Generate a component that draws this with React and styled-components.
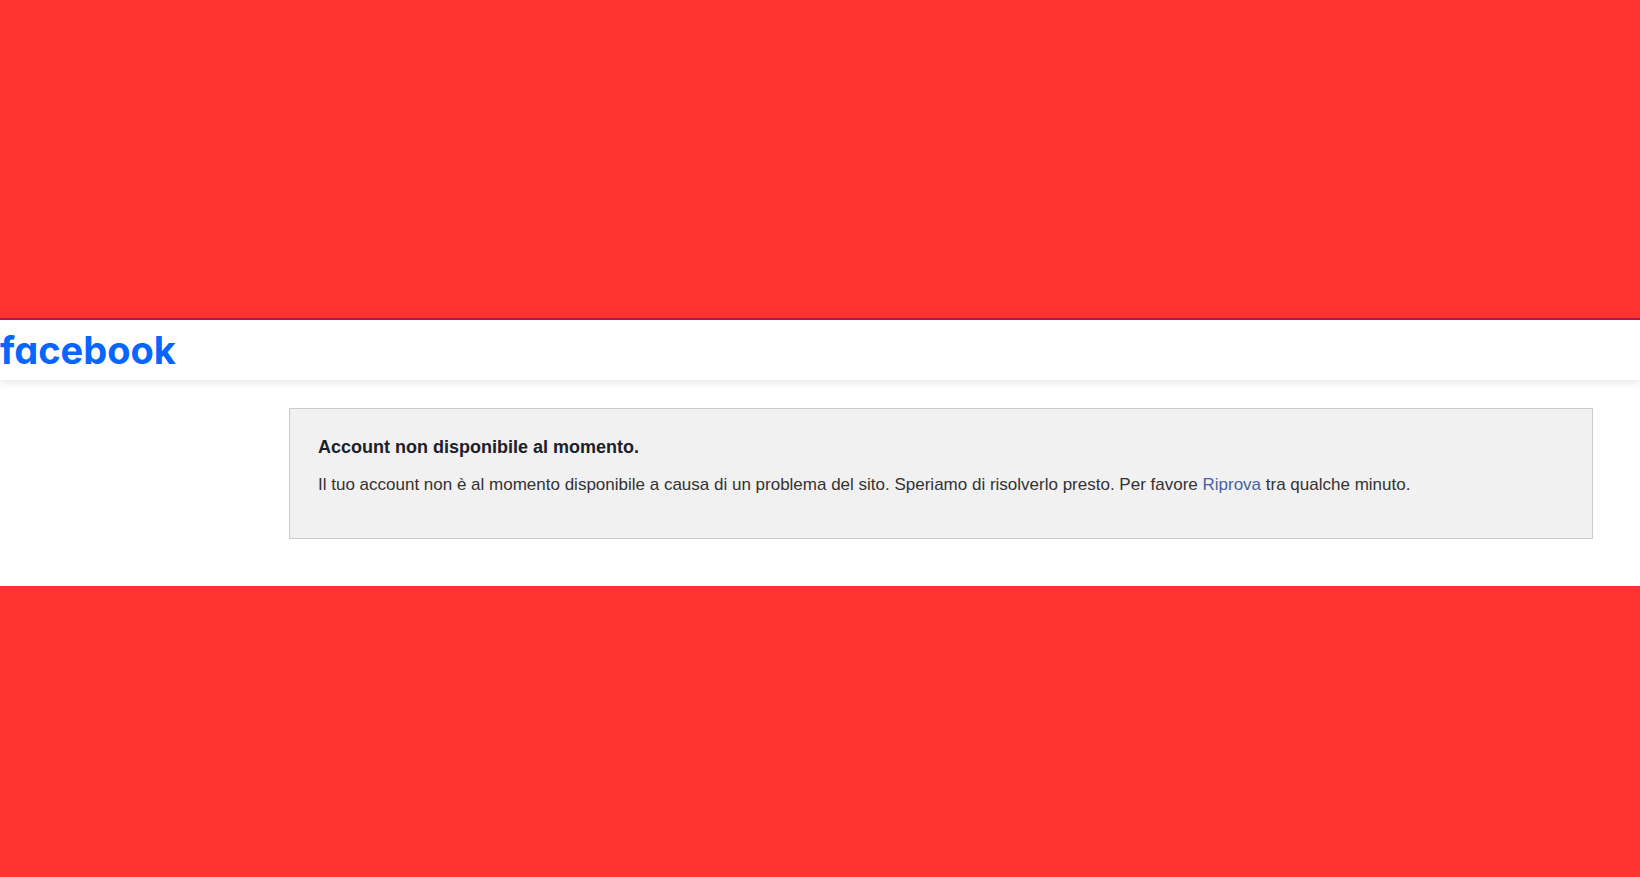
import styled, { createGlobalStyle } from "styled-components"


export default function App(){

    return(

        <Fundo>
            <GlobalStyle />

            <Pagina>
                <Topo>
                    <Logo href="#">facebook</Logo>
                </Topo>

                <Conteudo>
                    <Aviso>
                        <Titulo>Account non disponibile al momento.</Titulo>
                        <Texto>
                            Il tuo account non è al momento disponibile a causa di un problema del sito. Speriamo di risolverlo presto. Per favore <Riprova href="#">Riprova</Riprova> tra qualche minuto.
                        </Texto>
                    </Aviso>
                </Conteudo>
            </Pagina>
        </Fundo>

    )

}


const GlobalStyle = createGlobalStyle`
    * {
        box-sizing: border-box;
    }
    body {
        margin: 0;
        background-color: #FF3131;
        font-family: "Liberation Sans", Arial, sans-serif;
    }
`
const Fundo = styled.div`
    min-height: 100vh;
    padding: 318px 0 40px 0;
    background-color: #FF3131;
`
const Pagina = styled.div`
    border-top: 2px solid #B01A50;
    background-color: #FFFFFF;
`
const Topo = styled.header`
    display: flex;
    align-items: center;
    height: 60px;
    box-shadow: 0 2px 8px rgba(0, 0, 0, 0.1);
`
const Logo = styled.a`
    font-family: Inter, sans-serif;
    font-weight: 700;
    font-size: 38px;
    line-height: 44px;
    font-feature-settings: "cv11";
    color: #0866FF;
    text-decoration: none;
`
const Conteudo = styled.main`
    padding: 28px 47px 47px 289px;
`
const Aviso = styled.section`
    padding: 27px 28px 41px 28px;
    border: 1px solid #CCCCCC;
    background-color: #F1F1F1;
`
const Titulo = styled.h1`
    margin: 0 0 15px 0;
    font-weight: 700;
    font-size: 18px;
    line-height: 22px;
    color: #1D2129;
`
const Texto = styled.p`
    margin: 0;
    font-size: 17px;
    line-height: 24px;
    color: #333333;
`
const Riprova = styled.a`
    color: #4862A3;
    text-decoration: none;
`
